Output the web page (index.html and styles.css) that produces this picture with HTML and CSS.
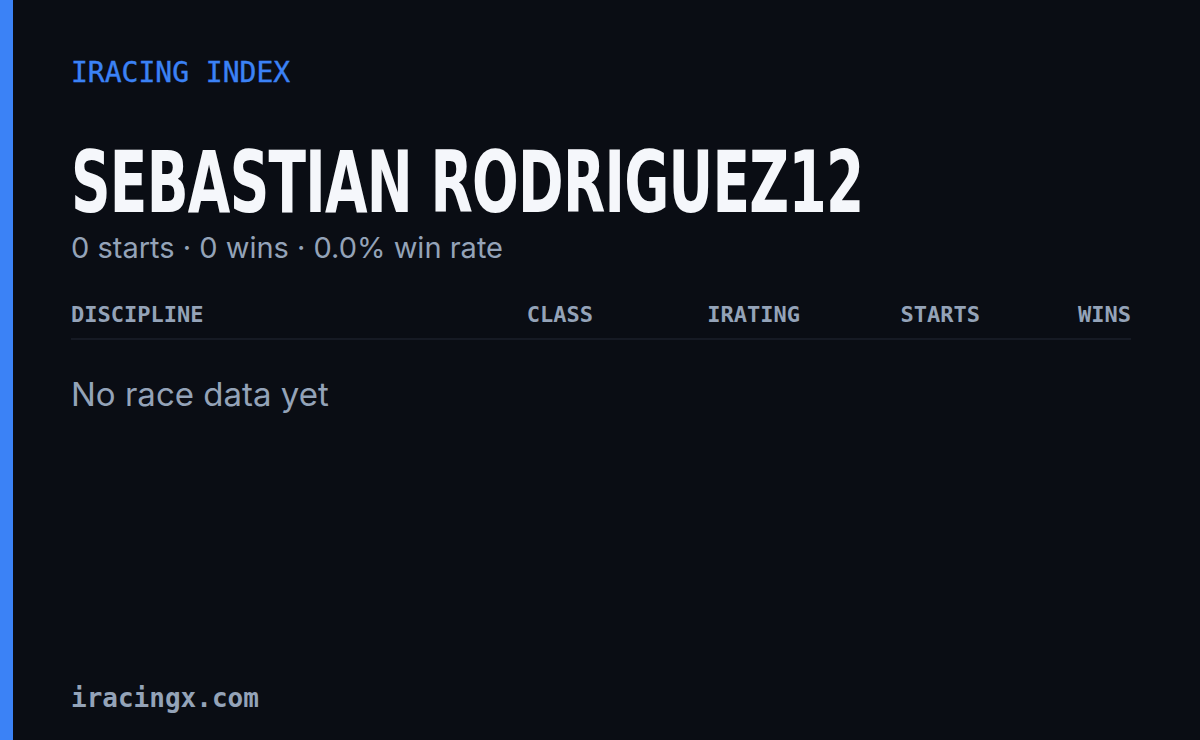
FILE: index.html
```html
<!DOCTYPE html>
<html lang="en">
<head>
    <meta charset="UTF-8">
    <meta name="viewport" content="width=device-width, initial-scale=1.0">
    <title>iRacing Index - Sebastian Rodriguez12</title>
    <link rel="stylesheet" href="styles.css">
</head>
<body>
    <div class="card">
        <div class="accent"></div>
        <div class="content">
            <div class="eyebrow">IRACING INDEX</div>
            <h1 class="name"><span class="name-text">SEBASTIAN RODRIGUEZ12</span></h1>
            <div class="summary">0 starts · 0 wins · 0.0% win rate</div>

            <div class="table-head">
                <span class="col col-discipline">DISCIPLINE</span>
                <span class="col col-class">CLASS</span>
                <span class="col col-irating">IRATING</span>
                <span class="col col-starts">STARTS</span>
                <span class="col col-wins">WINS</span>
            </div>
            <div class="empty">No race data yet</div>

            <div class="footer">iracingx.com</div>
        </div>
    </div>
</body>
</html>
```

FILE: styles.css
```css
body {
    margin: 0;
    padding: 0;
    background: #0a0d14;
    font-family: "Inter", "Noto Sans", sans-serif;
}
.card {
    display: flex;
    width: 1200px;
    height: 740px;
    background: #0a0d14;
    overflow: hidden;
}
.accent {
    flex: 0 0 13px;
    background: #3b82f6;
}
.content {
    flex: 1;
    min-width: 0;
    display: flex;
    flex-direction: column;
    padding: 56px 69px 26px 58px;
}
.eyebrow {
    font-family: "DejaVu Sans Mono", monospace;
    font-size: 28px;
    color: #3b82f6;
    line-height: 34px;
    -webkit-text-stroke: 0.4px #3b82f6;
}
.name {
    margin: 52px 0 0;
    font-family: "DejaVu Sans Condensed", "DejaVu Sans", sans-serif;
    font-weight: bold;
    font-size: 86px;
    line-height: 80px;
    color: #f5f7fb;
    white-space: nowrap;
}
/* the reference face is much narrower than any installed one */
.name-text {
    display: inline-block;
    transform: scaleX(0.71);
    transform-origin: left center;
    letter-spacing: -1px;
}
.summary {
    margin-top: 8px;
    font-size: 29px;
    line-height: 36px;
    color: #94a3b8;
}
.table-head {
    display: grid;
    grid-template-columns: 1fr 170px 207px 180px 151px;
    margin-top: 36px;
    padding-bottom: 10px;
    border-bottom: 2px solid #161a24;
    font-family: "DejaVu Sans Mono", monospace;
    font-size: 22px;
    font-weight: bold;
    color: #94a3b8;
    line-height: 26px;
}
.col {
    text-align: right;
}
.col-discipline {
    text-align: left;
}
.empty {
    margin-top: 34px;
    font-size: 33px;
    line-height: 40px;
    color: #94a3b8;
}
.footer {
    margin-top: auto;
    font-family: "DejaVu Sans Mono", monospace;
    font-size: 26px;
    font-weight: bold;
    color: #94a3b8;
    line-height: 32px;
}
```
